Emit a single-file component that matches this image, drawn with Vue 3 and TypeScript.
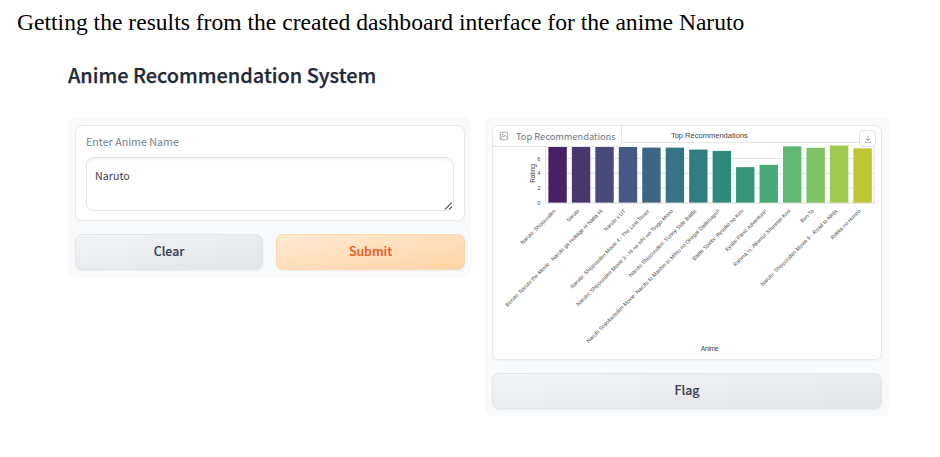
<script setup lang="ts">
import { ref } from 'vue'

interface Bar {
  name: string
  top: number
  color: string
  start: number
  end: number
}

const query = ref('Naruto')

const bars: Bar[] = [
  { name: 'Naruto: Shippuuden', top: 147, color: '#472163', start: 519.7, end: 556 },
  { name: 'Naruto', top: 147, color: '#4a366f', start: 565.7, end: 579.4 },
  { name: 'Boruto: Naruto the Movie - Naruto ga Hokage ni Natta Hi', top: 147, color: '#4a497b', start: 504.5, end: 603 },
  { name: 'Naruto x UT', top: 147, color: '#455a82', start: 603, end: 626 },
  { name: 'Naruto: Shippuuden Movie 4 - The Lost Tower', top: 147.6, color: '#3d6682', start: 569.5, end: 649.8 },
  { name: 'Naruto: Shippuuden Movie 3 - Hi no Ishi wo Tsugu Mono', top: 147.6, color: '#377382', start: 575.5, end: 673.4 },
  { name: 'Naruto Shippuuden: Sunny Side Battle', top: 149.6, color: '#327d81', start: 628, end: 696.8 },
  { name: 'Naruto Soyokazeden Movie: Naruto to Mashin to Mitsu no Onegai Dattebayo!!', top: 150.9, color: '#2f8a7d', start: 585.5, end: 720.3 },
  { name: 'Battle Spirits: Ryuuko no Ken', top: 167.1, color: '#35977a', start: 691.5, end: 743.8 },
  { name: 'Kyotai Panic Adventure!', top: 164.8, color: '#47a878', start: 724.3, end: 767.2 },
  { name: 'Ranma ½: Akumu! Shunmin Kou', top: 146.3, color: '#61b872', start: 732.5, end: 790.7 },
  { name: 'Ben-To', top: 147.8, color: '#80c364', start: 799.6, end: 814.2 },
  { name: 'Naruto: Shippuuden Movie 6 - Road to Ninja', top: 145.5, color: '#9fc94c', start: 759.7, end: 837.6 },
  { name: 'Rekka no Honoo', top: 148.3, color: '#bbc735', start: 829.7, end: 861 },
]

const baseline = 202.6
const ticks = [
  { value: 6, y: 158.5 },
  { value: 4, y: 173.3 },
  { value: 2, y: 188 },
  { value: 0, y: 202.8 },
]

const barX = (i: number) => 548.4 + i * 23.46
const labelLength = (b: Bar) => (b.end - b.start - 3) * Math.SQRT2
</script>

<template>
  <main class="page">
    <p class="caption">Getting the results from the created dashboard interface for the anime Naruto</p>
    <h1 class="title">Anime Recommendation System</h1>
    <div class="columns">
      <section class="panel">
        <div class="block form">
          <label class="label" for="anime">Enter Anime Name</label>
          <div class="field">
            <textarea id="anime" v-model="query" class="input" spellcheck="false"></textarea>
            <svg class="grip" viewBox="0 0 9 8"><path d="M1 7.3 7.7.7M5 7.3 8 4.6" /></svg>
          </div>
        </div>
        <div class="buttons">
          <button class="btn">Clear</button>
          <button class="btn primary">Submit</button>
        </div>
      </section>

      <section class="panel">
        <div class="block output">
          <svg class="chart" viewBox="493 126 388 233">
            <path class="frame" d="M545.5 142.5H874V203H545.5Z" />
            <path v-for="t in ticks" :key="t.value" class="grid" :d="`M545 ${t.y}H874`" />
            <rect
              v-for="(b, i) in bars"
              :key="b.name"
              :x="barX(i)"
              :y="b.top"
              width="18.4"
              :height="baseline - b.top"
              :fill="b.color"
            />
            <text v-for="t in ticks" :key="t.value" class="tick" x="540.6" :y="t.y + 2">{{ t.value }}</text>
            <text
              v-for="b in bars"
              :key="b.name"
              class="name"
              :transform="`translate(${b.end} 211.5) rotate(-45)`"
              :textLength="labelLength(b)"
              lengthAdjust="spacingAndGlyphs"
            >{{ b.name }}</text>
            <text class="axis" transform="translate(534.6 173.4) rotate(-90)" textLength="18.5">Rating</text>
            <text class="axis" x="709.7" y="350.6" textLength="18">Anime</text>
            <text class="heading" x="709.4" y="138.2" textLength="77">Top Recommendations</text>
          </svg>
          <div class="tag">
            <svg class="tag-icon" viewBox="0 0 24 24">
              <rect x="3" y="3" width="18" height="18" rx="1" />
              <circle cx="8.5" cy="8.5" r="1.5" />
              <path d="m21 16-7-6-4 5-3-2-4 6" />
            </svg>
            <span>Top Recommendations</span>
          </div>
          <button class="download" aria-label="Download">
            <svg viewBox="0 0 32 32"><path d="M26 24v4H6v-4H4v4a2 2 0 0 0 2 2h20a2 2 0 0 0 2-2v-4zm0-10-1.4-1.4L17 20.2V2h-2v18.2l-7.6-7.6L6 14l10 10z" /></svg>
          </button>
        </div>
        <button class="btn flag">Flag</button>
      </section>
    </div>
  </main>
</template>

<style>
body {
  background: #fff;
}
</style>

<style scoped>
.page {
  box-sizing: border-box;
  height: 457px;
  padding: 8px 0 0;
  overflow: hidden;
  font-family: "Noto Sans CJK SC", "Noto Sans", sans-serif;
}
.caption {
  margin: 0 0 0 17px;
  font: 23.58px/28px "Liberation Serif", serif;
  color: #000;
  white-space: nowrap;
}
.title {
  margin: 24px 0 0 68px;
  font-size: 19.9px;
  font-weight: 500;
  line-height: 30px;
  color: #1f2937;
  white-space: nowrap;
  -webkit-text-stroke: 0.25px #1f2937;
}
.columns {
  display: flex;
  align-items: flex-start;
  gap: 14px;
  margin: 27px 0 0 68px;
}
.panel {
  box-sizing: border-box;
  display: flex;
  flex-direction: column;
  gap: 13px;
  width: 403px;
  padding: 8px 6px 7px 7px;
  background: #f9fafc;
  border-radius: 7px;
}
.panel + .panel {
  width: 404px;
  padding-right: 7px;
}
.block {
  box-sizing: border-box;
  background: #fff;
  border: 1px solid #e6e8ec;
  border-radius: 7px;
  box-shadow: 0 1px 2px #0000000a;
}
.form {
  height: 96px;
  padding: 7px 10px;
}
.label {
  display: block;
  font-size: 10.7px;
  line-height: 17px;
  color: #777d87;
}
.field {
  position: relative;
  height: 54px;
  margin-top: 7px;
}
.input {
  display: block;
  box-sizing: border-box;
  width: 100%;
  height: 54px;
  padding: 8px;
  font: 10.7px/19px "Noto Sans CJK SC", sans-serif;
  color: #3a414d;
  background: #fff;
  border: 1px solid #e3e5e9;
  border-radius: 7px;
  outline: none;
  resize: none;
  box-shadow: inset 0 2px 3px #0000000b;
}
.grip {
  position: absolute;
  right: 1px;
  bottom: 1px;
  width: 9px;
  height: 8px;
  fill: none;
  stroke: #4a4a4a;
  stroke-width: 1.1;
}
.buttons {
  display: grid;
  grid-template-columns: 188px 189px;
  gap: 13px;
}
.btn {
  box-sizing: border-box;
  height: 36px;
  padding: 0 0 2px;
  font: 500 12.4px/18px "Noto Sans CJK SC", sans-serif;
  color: #374151;
  background: linear-gradient(to bottom right, #f3f4f6, #e3e4e9);
  border: 1px solid #e3e5e9;
  border-radius: 7px;
  box-shadow: 0 1px 2px #0000000d;
  -webkit-text-stroke: 0.15px currentColor;
}
.primary {
  color: #ea5a20;
  background: linear-gradient(to bottom right, #ffead3, #fed4a5);
  border-color: #fed9b1;
}
.output {
  position: relative;
  height: 235px;
  overflow: hidden;
}
.chart {
  display: block;
  width: 388px;
  height: 233px;
  font-family: "Liberation Sans", sans-serif;
  fill: #505050;
}
.frame,
.grid {
  fill: none;
  stroke: #e5e5e5;
  stroke-width: 1.2;
}
.tick {
  font-size: 5.8px;
  text-anchor: end;
}
.name {
  font-size: 5.5px;
  text-anchor: end;
}
.axis,
.heading {
  font-size: 6.6px;
  text-anchor: middle;
  fill: #444;
}
.heading {
  font-size: 7.6px;
}
.tag {
  position: absolute;
  top: 0;
  left: 0;
  box-sizing: border-box;
  display: flex;
  align-items: center;
  gap: 7px;
  width: 129px;
  height: 21px;
  padding: 0 0 1px 6px;
  font-size: 9.25px;
  line-height: 18px;
  color: #70757e;
  white-space: nowrap;
  background: #fff;
  border: solid #e3e5e9;
  border-width: 0 1px 1px 0;
  border-radius: 0 0 5px 0;
}
.tag-icon {
  flex: none;
  width: 10px;
  height: 10px;
  fill: none;
  stroke: #858a92;
  stroke-width: 1.7;
}
.download {
  position: absolute;
  top: 4px;
  right: 5px;
  box-sizing: border-box;
  display: grid;
  place-items: center;
  width: 17px;
  height: 17px;
  padding: 0;
  background: #fff;
  border: 1px solid #e1e3e8;
  border-radius: 4px;
}
.download svg {
  width: 8px;
  height: 8px;
  fill: #777d86;
}
</style>
